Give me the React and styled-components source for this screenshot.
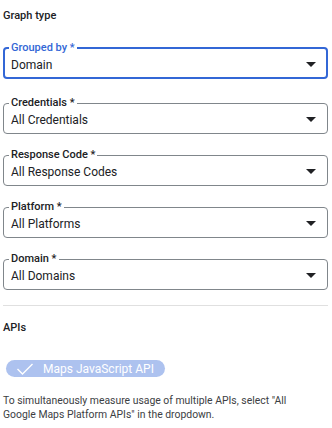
import React from 'react'
import styled, { createGlobalStyle } from 'styled-components'

const GlobalStyle = createGlobalStyle`
  body {
    margin: 0;
    background: #fff;
    font-family: Roboto, "Liberation Sans", sans-serif;
    color: #202124;
  }
`

const blue = '#3367d6'

// layout
const Panel = styled.div`
  width: 332px;
  box-sizing: border-box;
  padding: 9px 4px 0 3px;
`

const SectionTitle = styled.div`
  font-size: 11px;
  font-weight: 500;
  line-height: 14px;
  color: #202124;
  margin-top: ${(p) => p.$top || 0}px;
`

// outlined select
const Field = styled.fieldset`
  margin: ${(p) => p.$top}px 0 0;
  padding: 0 ${(p) => (p.$focused ? 10 : 11)}px 0 ${(p) => (p.$focused ? 6 : 7)}px;
  border: ${(p) => (p.$focused ? `2px solid ${blue}` : '1px solid #80868b')};
  border-radius: 4px;
  min-width: 0;
`

const Label = styled.legend`
  margin-left: -2px;
  padding: 0 2px;
  font-size: 11px;
  font-weight: 500;
  line-height: 12px;
  color: ${(p) => (p.$focused ? blue : '#202124')};
`

const Row = styled.div`
  display: flex;
  align-items: center;
  justify-content: space-between;
  height: 21px;
  padding-bottom: ${(p) => (p.$focused ? 2 : 3)}px;
`

const Value = styled.span`
  font-size: 12px;
  color: #202124;
`

const Arrow = styled.span`
  width: 0;
  height: 0;
  border-left: 5px solid transparent;
  border-right: 5px solid transparent;
  border-top: 5px solid #202124;
`

const Divider = styled.hr`
  margin: 15px 0 0;
  border: 0;
  border-top: 1px solid #e0e0e0;
`

const Chip = styled.div`
  display: inline-flex;
  align-items: center;
  gap: 10px;
  margin: 25px 0 0 3px;
  height: 17px;
  padding: 0 11px;
  border-radius: 9px;
  background: #adc2ef;
  color: #fff;
  font-size: 12px;
`

const Help = styled.p`
  margin: 15px 0 0;
  max-width: 300px;
  font-size: 10.4px;
  line-height: 14px;
  color: #3c4043;
`

const Check = () => (
  <svg width="16" height="12" viewBox="0 0 16 12" fill="none">
    <polyline points="0.5,6 5.5,11 15.5,1" stroke="#fff" strokeWidth="1.4" />
  </svg>
)

const Select = ({ label, value, focused, top }) => (
  <Field $focused={focused} $top={top}>
    <Label $focused={focused}>{label} *</Label>
    <Row $focused={focused}>
      <Value>{value}</Value>
      <Arrow />
    </Row>
  </Field>
)

const fields = [
  ['Credentials', 'All Credentials'],
  ['Response Code', 'All Response Codes'],
  ['Platform', 'All Platforms'],
  ['Domain', 'All Domains'],
]

export default function App() {
  return (
    <>
      <GlobalStyle />
      <Panel>
        <SectionTitle>Graph type</SectionTitle>
        <Select label="Grouped by" value="Domain" focused top={19} />
        {fields.map(([label, value], i) => (
          <Select key={label} label={label} value={value} top={i === 0 ? 18 : 15} />
        ))}
        <Divider />
        <SectionTitle $top={15}>APIs</SectionTitle>
        <Chip>
          <Check />
          Maps JavaScript API
        </Chip>
        <Help>
          To simultaneously measure usage of multiple APIs, select "All Google Maps Platform APIs" in the
          dropdown.
        </Help>
      </Panel>
    </>
  )
}
